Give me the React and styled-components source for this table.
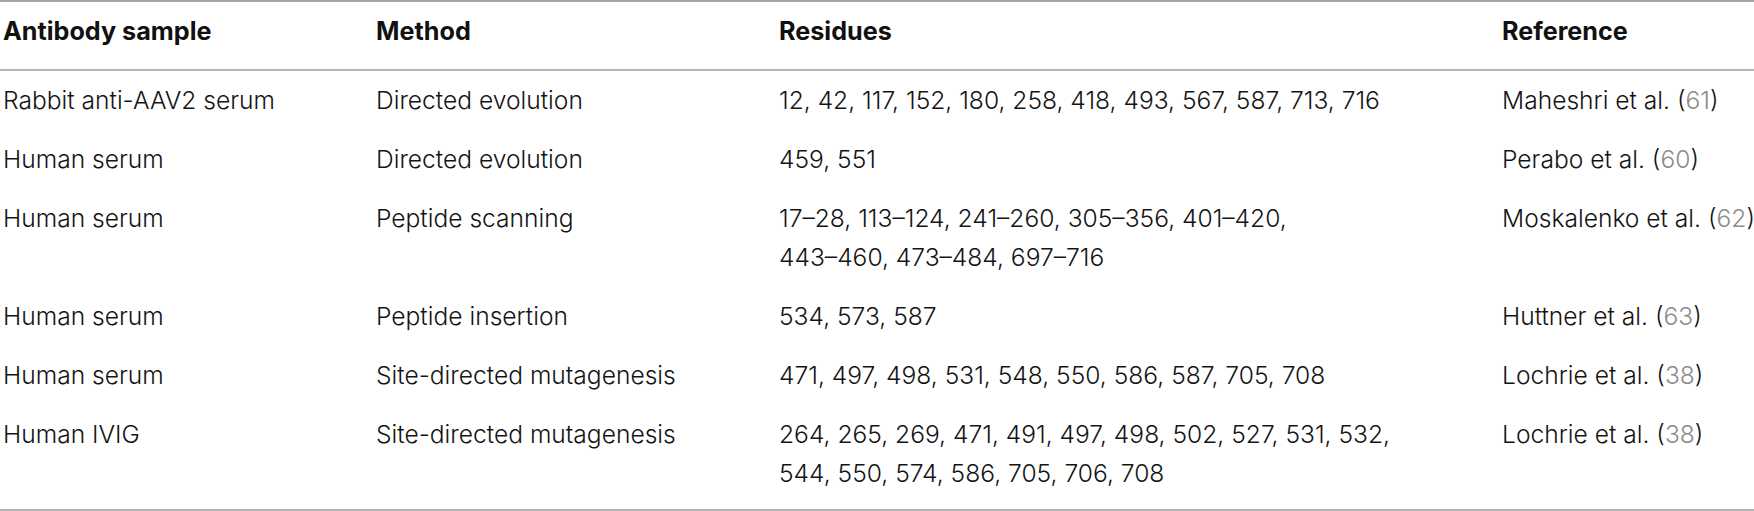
import React from "react";
import styled, { createGlobalStyle } from "styled-components";

const GlobalStyle = createGlobalStyle`
  html, body {
    margin: 0;
    background: #ffffff;
  }
  body {
    font-family: Inter, "Liberation Sans", Arial, sans-serif;
    color: #1a1a1a;
  }
`;

const Table = styled.table`
  width: 1754px;
  border-collapse: collapse;
  table-layout: fixed;
  border-top: 2px solid #a6a6a6;
  border-bottom: 2px solid #b4b4b4;
  font-size: 24.6px;
  line-height: 39px;
`;

const HeadCell = styled.th`
  text-align: left;
  font-weight: 700;
  font-size: 25.2px;
  color: #111111;
  padding: 10px 0 18px ${(p) => (p.$first ? "3px" : "0")};
  border-bottom: 2px solid #b4b4b4;
  white-space: nowrap;
`;

const Cell = styled.td`
  vertical-align: top;
  font-weight: 300;
  color: #141414;
  padding: 10px 0 ${(p) => (p.$last ? "16px" : "10px")} ${(p) => (p.$first ? "3px" : "0")};
  white-space: nowrap;
`;

const CiteNum = styled.span`
  color: #8c8c8c;
`;

const columns = [
  { title: "Antibody sample", width: 376 },
  { title: "Method", width: 403 },
  { title: "Residues", width: 723 },
  { title: "Reference", width: 252 },
];

const rows = [
  {
    sample: "Rabbit anti-AAV2 serum",
    method: "Directed evolution",
    residues: ["12, 42, 117, 152, 180, 258, 418, 493, 567, 587, 713, 716"],
    author: "Maheshri et al.",
    ref: "61",
  },
  {
    sample: "Human serum",
    method: "Directed evolution",
    residues: ["459, 551"],
    author: "Perabo et al.",
    ref: "60",
  },
  {
    sample: "Human serum",
    method: "Peptide scanning",
    residues: [
      "17–28, 113–124, 241–260, 305–356, 401–420,",
      "443–460, 473–484, 697–716",
    ],
    author: "Moskalenko et al.",
    ref: "62",
  },
  {
    sample: "Human serum",
    method: "Peptide insertion",
    residues: ["534, 573, 587"],
    author: "Huttner et al.",
    ref: "63",
  },
  {
    sample: "Human serum",
    method: "Site-directed mutagenesis",
    residues: ["471, 497, 498, 531, 548, 550, 586, 587, 705, 708"],
    author: "Lochrie et al.",
    ref: "38",
  },
  {
    sample: "Human IVIG",
    method: "Site-directed mutagenesis",
    residues: [
      "264, 265, 269, 471, 491, 497, 498, 502, 527, 531, 532,",
      "544, 550, 574, 586, 705, 706, 708",
    ],
    author: "Lochrie et al.",
    ref: "38",
  },
];

const App = () => {
  return (
    <>
      <GlobalStyle />
      <Table>
        <colgroup>
          {columns.map((c) => (
            <col key={c.title} style={{ width: c.width }} />
          ))}
        </colgroup>
        <thead>
          <tr>
            {columns.map((c, i) => (
              <HeadCell key={c.title} $first={i === 0}>
                {c.title}
              </HeadCell>
            ))}
          </tr>
        </thead>
        <tbody>
          {rows.map((r, i) => {
            const last = i === rows.length - 1;
            return (
              <tr key={i}>
                <Cell $first $last={last}>
                  {r.sample}
                </Cell>
                <Cell $last={last}>{r.method}</Cell>
                <Cell $last={last}>
                  {r.residues.map((line, j) => (
                    <div key={j}>{line}</div>
                  ))}
                </Cell>
                <Cell $last={last}>
                  {r.author} (<CiteNum>{r.ref}</CiteNum>)
                </Cell>
              </tr>
            );
          })}
        </tbody>
      </Table>
    </>
  );
};

export default App;
